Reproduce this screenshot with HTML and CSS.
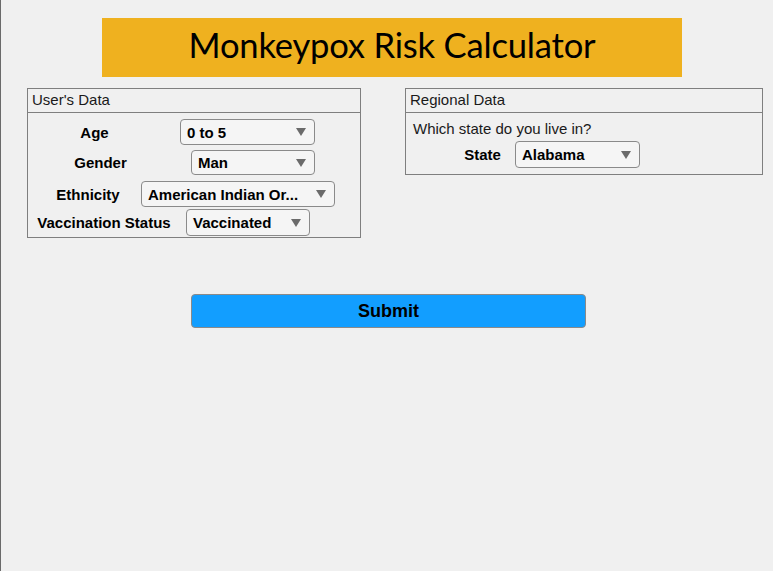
FILE: index.html
```html
<!DOCTYPE html>
<html>
<head>
<meta charset="utf-8">
<link rel="stylesheet" href="styles.css">
</head>
<body>
<div class="app">
  <div class="banner"><h1 class="title">Monkeypox Risk Calculator</h1></div>
  <div class="panels">
    <section class="panel panel-user">
      <div class="panel-head">User's Data</div>
      <div class="panel-body">
        <div class="row row-age">
          <span class="lab">Age</span>
          <div class="dd dd-age"><span class="dd-text">0 to 5</span><span class="arrow"></span></div>
        </div>
        <div class="row row-gender">
          <span class="lab">Gender</span>
          <div class="dd dd-gender"><span class="dd-text">Man</span><span class="arrow"></span></div>
        </div>
        <div class="row row-eth">
          <span class="lab">Ethnicity</span>
          <div class="dd dd-eth"><span class="dd-text">American Indian Or...</span><span class="arrow"></span></div>
        </div>
        <div class="row row-vac">
          <span class="lab">Vaccination Status</span>
          <div class="dd dd-vac"><span class="dd-text">Vaccinated</span><span class="arrow"></span></div>
        </div>
      </div>
    </section>
    <section class="panel panel-region">
      <div class="panel-head">Regional Data</div>
      <div class="panel-body region-body">
        <div class="question">Which state do you live in?</div>
        <div class="row row-state">
          <span class="lab">State</span>
          <div class="dd dd-state"><span class="dd-text">Alabama</span><span class="arrow"></span></div>
        </div>
      </div>
    </section>
  </div>
  <button class="submit">Submit</button>
</div>
</body>
</html>
```
FILE: styles.css
```css
html, body {
  margin: 0;
  padding: 0;
  background: #ffffff;
}
.app {
  box-sizing: border-box;
  width: 773px;
  height: 571px;
  background: #f0f0f0;
  border-left: 1px solid #6a6a6a;
  padding-top: 18px;
  font-family: "Liberation Sans", Arial, sans-serif;
  font-size: 15px;
  color: #000;
  display: flex;
  flex-direction: column;
  align-items: flex-start;
}
.banner {
  margin-left: 101px;
  width: 580px;
  height: 59px;
  background: #efb11f;
  display: flex;
  align-items: center;
  justify-content: center;
}
.title {
  margin: 0 0 6px 0;
  font-family: Lato, "Open Sans", sans-serif;
  font-weight: normal;
  font-size: 34.6px;
  line-height: 40px;
  color: #000;
  letter-spacing: -0.2px;
}
.panels {
  display: flex;
  margin-top: 11px;
  margin-left: 26px;
  gap: 44px;
  align-items: flex-start;
}
.panel {
  box-sizing: border-box;
  border: 1px solid #7f7f7f;
}
.panel-user {
  width: 334px;
  height: 150px;
}
.panel-region {
  width: 358px;
  height: 87px;
}
.panel-head {
  height: 23px;
  border-bottom: 1px solid #7f7f7f;
  padding-left: 4px;
  line-height: 22px;
  color: #1a1a1a;
}
.panel-body {
  padding-top: 6px;
}
.row {
  display: flex;
  align-items: center;
}
.lab {
  font-weight: bold;
  white-space: nowrap;
  display: flex;
  justify-content: center;
}
.dd {
  box-sizing: border-box;
  height: 26px;
  border: 1px solid #8a8a8a;
  border-radius: 4px;
  background: #f5f5f5;
  display: flex;
  align-items: center;
  justify-content: space-between;
  padding: 0 8px 0 6px;
  font-weight: bold;
}
.dd-text {
  white-space: nowrap;
}
.arrow {
  width: 0;
  height: 0;
  border-left: 5px solid transparent;
  border-right: 5px solid transparent;
  border-top: 8px solid #6b6b6b;
}
.row-age .lab { margin-left: 53px; width: 27px; }
.dd-age { margin-left: 72px; width: 135px; }
.row-gender { margin-top: 5px; }
.row-gender .lab { margin-left: 46px; width: 53px; }
.dd-gender { margin-left: 64px; width: 124px; height: 25px; }
.row-eth { margin-top: 6px; }
.row-eth .lab { margin-left: 29px; width: 62px; }
.dd-eth { margin-left: 22px; width: 194px; }
.row-vac { margin-top: 2px; }
.row-vac .lab { margin-left: 10px; width: 132px; }
.dd-vac { margin-left: 16px; width: 124px; height: 27px; }

.region-body {
  padding-top: 7px;
}
.question {
  padding-left: 7px;
  line-height: 17px;
  color: #1a1a1a;
}
.row-state {
  margin-top: 4px;
}
.row-state .lab { margin-left: 59px; width: 35px; }
.dd-state { margin-left: 15px; width: 125px; height: 27px; }

.submit {
  box-sizing: border-box;
  margin-top: 56px;
  margin-left: 190px;
  width: 395px;
  height: 34px;
  background: #129eff;
  border: 1px solid #8a8a8a;
  border-radius: 4px;
  font-family: "Liberation Sans", Arial, sans-serif;
  font-weight: bold;
  font-size: 18px;
  color: #000;
  padding: 0;
}
```
